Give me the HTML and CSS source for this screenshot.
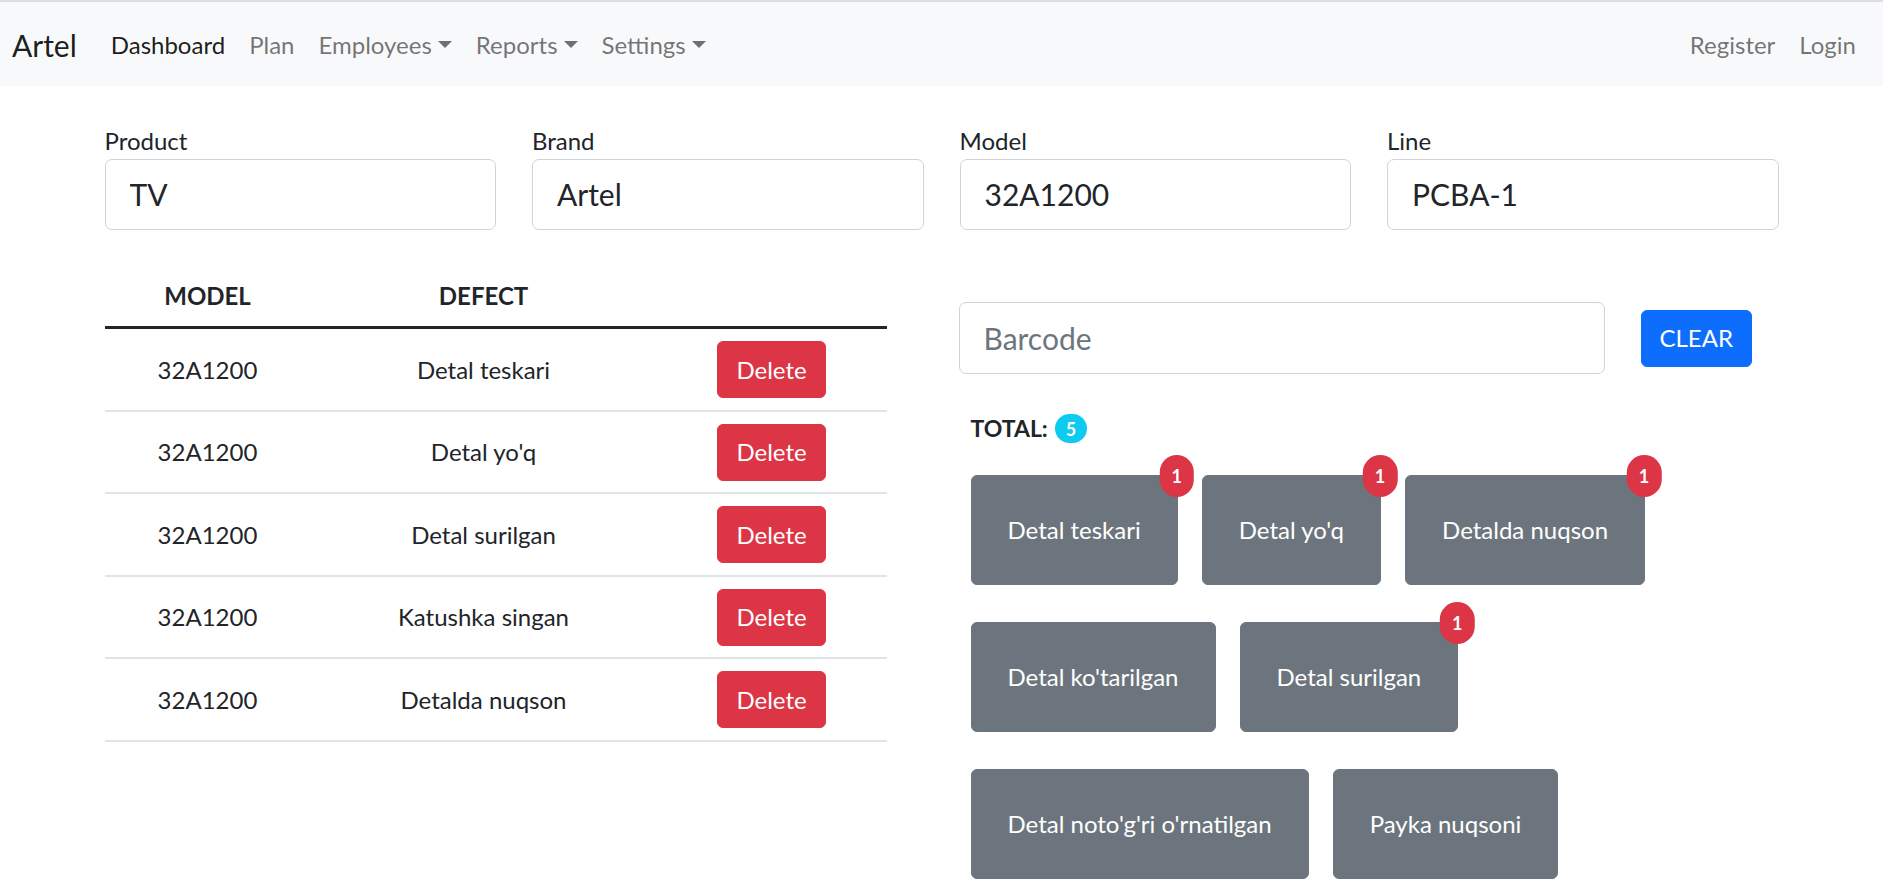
FILE: index.html
```html
<!DOCTYPE html>
<html lang="en">
<head>
<meta charset="utf-8">
<title>Artel</title>
<link rel="stylesheet" href="styles.css">
</head>
<body>
<nav class="navbar">
  <a class="brand" href="#">Artel</a>
  <ul class="nav-main">
    <li><a class="nav-link active" href="#">Dashboard</a></li>
    <li><a class="nav-link" href="#">Plan</a></li>
    <li><a class="nav-link dropdown" href="#">Employees</a></li>
    <li><a class="nav-link dropdown" href="#">Reports</a></li>
    <li><a class="nav-link dropdown" href="#">Settings</a></li>
  </ul>
  <ul class="nav-right">
    <li><a class="nav-link" href="#">Register</a></li>
    <li><a class="nav-link" href="#">Login</a></li>
  </ul>
</nav>

<main class="container">
  <div class="form-row">
    <div class="field">
      <label class="label">Product</label>
      <input class="input" type="text" value="TV">
    </div>
    <div class="field">
      <label class="label">Brand</label>
      <input class="input" type="text" value="Artel">
    </div>
    <div class="field">
      <label class="label">Model</label>
      <input class="input" type="text" value="32A1200">
    </div>
    <div class="field">
      <label class="label">Line</label>
      <input class="input" type="text" value="PCBA-1">
    </div>
  </div>

  <div class="content-row">
    <div class="left-col">
      <table class="defects-table">
        <thead>
          <tr><th class="c-model">MODEL</th><th class="c-defect">DEFECT</th><th class="c-action"></th></tr>
        </thead>
        <tbody>
          <tr><td>32A1200</td><td>Detal teskari</td><td><button class="btn btn-danger">Delete</button></td></tr>
          <tr><td>32A1200</td><td>Detal yo'q</td><td><button class="btn btn-danger">Delete</button></td></tr>
          <tr><td>32A1200</td><td>Detal surilgan</td><td><button class="btn btn-danger">Delete</button></td></tr>
          <tr><td>32A1200</td><td>Katushka singan</td><td><button class="btn btn-danger">Delete</button></td></tr>
          <tr><td>32A1200</td><td>Detalda nuqson</td><td><button class="btn btn-danger">Delete</button></td></tr>
        </tbody>
      </table>
    </div>

    <div class="right-col">
      <div class="barcode-row">
        <input class="input barcode" type="text" placeholder="Barcode">
        <button class="btn btn-primary">CLEAR</button>
      </div>
      <div class="total">TOTAL: <span class="badge badge-info">5</span></div>
      <div class="defect-grid">
        <button class="defect-btn">Detal teskari<span class="badge badge-danger corner">1</span></button>
        <button class="defect-btn">Detal yo'q<span class="badge badge-danger corner">1</span></button>
        <button class="defect-btn">Detalda nuqson<span class="badge badge-danger corner">1</span></button>
        <button class="defect-btn">Detal ko'tarilgan</button>
        <button class="defect-btn">Detal surilgan<span class="badge badge-danger corner">1</span></button>
        <button class="defect-btn">Detal noto'g'ri o'rnatilgan</button>
        <button class="defect-btn">Payka nuqsoni</button>
      </div>
    </div>
  </div>
</main>
</body>
</html>
```

FILE: styles.css
```css
* { box-sizing: border-box; }

html, body {
  margin: 0;
  padding: 0;
}

body {
  font-family: Lato, "Noto Sans", "Liberation Sans", sans-serif;
  font-size: 24px;
  line-height: 1.5;
  color: #212529;
  background: #ffffff;
}

a { text-decoration: none; }

/* Navbar */
.navbar {
  display: flex;
  align-items: center;
  height: 86px;
  padding: 2px 12px 0;
  background: #f8f9fa;
  border-top: 2px solid #dcdee1;
}

.brand {
  font-size: 30px;
  line-height: 45px;
  color: rgba(0, 0, 0, 0.9);
  margin-right: 22px;
}

.nav-main, .nav-right {
  display: flex;
  list-style: none;
  margin: 0;
  padding: 0;
}

.nav-right { margin-left: auto; margin-right: 3px; }

.nav-link {
  display: block;
  padding: 12px 12px;
  line-height: 36px;
  color: rgba(0, 0, 0, 0.55);
}

.nav-link.active { color: rgba(0, 0, 0, 0.9); }

.nav-link.dropdown::after {
  content: "";
  display: inline-block;
  margin-left: 6px;
  vertical-align: 6px;
  border-top: 7px solid currentColor;
  border-left: 7px solid transparent;
  border-right: 7px solid transparent;
}

/* Container */
.container {
  width: 1710px;
  margin: 0 auto;
  padding: 36.5px 18px 0;
}

.form-row {
  display: grid;
  grid-template-columns: repeat(4, 1fr);
  column-gap: 36px;
}

.field { display: flex; flex-direction: column; }

.label {
  display: block;
  line-height: 36px;
}

.input {
  display: block;
  width: 100%;
  height: 71px;
  padding: 12px 24px;
  font-family: inherit;
  font-size: 30px;
  line-height: 45px;
  color: #212529;
  background: #fff;
  border: 1px solid #ced4da;
  border-radius: 7px;
  outline: none;
}

.input::placeholder { color: #6c757d; }

.content-row {
  display: grid;
  grid-template-columns: 818px 818px;
  column-gap: 36px;
  margin-top: 36.5px;
}

/* Table */
.defects-table {
  width: 782px;
  border-collapse: collapse;
  table-layout: fixed;
}

.defects-table th, .defects-table td {
  text-align: center;
  padding: 12px;
  line-height: 36px;
}

.defects-table th {
  font-weight: 700;
  border-bottom: 3px solid #212529;
}

.defects-table td {
  border-bottom: 2px solid #e1e4e7;
  padding: 12px 12px 11.5px;
  vertical-align: middle;
}

.c-model { width: 206px; }
.c-defect { width: 346px; }
.c-action { width: 230px; }

.btn {
  display: inline-block;
  font-family: inherit;
  font-size: 24px;
  line-height: 36px;
  padding: 9.5px 18px;
  border: 1px solid transparent;
  border-radius: 6px;
  color: #fff;
  cursor: pointer;
  vertical-align: middle;
}

.btn-danger { background: #dc3545; border-color: #dc3545; }
.btn-primary { background: #0d6efd; border-color: #0d6efd; }

/* Right column */
.right-col { padding-top: 36px; }

.barcode-row {
  display: flex;
  align-items: center;
  gap: 36px;
}

.barcode { width: 646px; height: 72px; }

.total {
  margin-top: 38px;
  margin-left: 12px;
  font-size: 23px;
  font-weight: 700;
  line-height: 33px;
  display: flex;
  align-items: center;
  gap: 7px;
}

.badge {
  display: inline-block;
  font-weight: 700;
  color: #fff;
  text-align: center;
  border-radius: 50rem;
}

.badge-info {
  background: #0dcaf0;
  font-size: 18px;
  line-height: 18px;
  padding: 6px 11px 5px;
}

.badge-danger {
  background: #dc3545;
  font-size: 18px;
  line-height: 18px;
  padding: 12px 12px;
  min-width: 34px;
}

.defect-grid {
  display: flex;
  flex-wrap: wrap;
  column-gap: 24px;
  row-gap: 37px;
  margin-top: 30px;
  margin-left: 12px;
  width: 720px;
}

.defect-btn {
  position: relative;
  font-family: inherit;
  font-size: 24px;
  line-height: 36px;
  padding: 36px 36px;
  color: #fff;
  background: #6c757d;
  border: 1px solid #6c757d;
  border-radius: 6px;
  cursor: pointer;
}

.corner {
  position: absolute;
  top: 0;
  left: 100%;
  transform: translate(-50%, -50%);
}
```
